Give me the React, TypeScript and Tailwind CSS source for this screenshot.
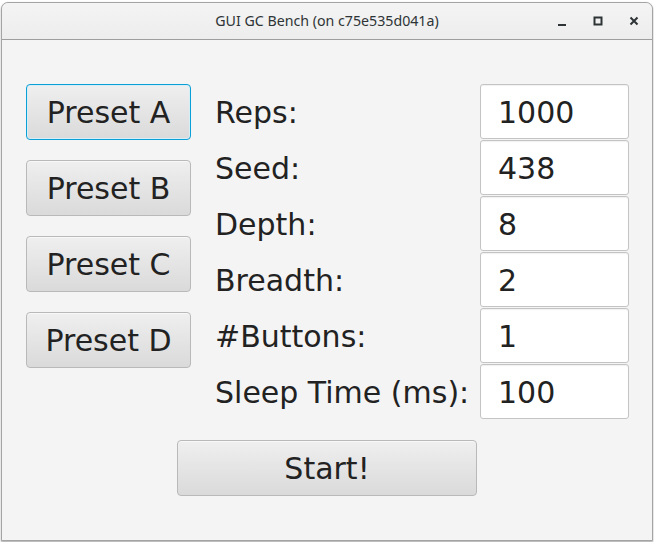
import React from "react";

const font = { fontFamily: '"DejaVu Sans", sans-serif' };

function FxButton({ label, focused, className = "" }: { label: string; focused?: boolean; className?: string }) {
  return (
    <div
      className={
        "flex items-center justify-center rounded-[4px] border bg-gradient-to-b from-[#efefef] to-[#dadada] pt-[2px] text-[30px] leading-none text-[#222] " +
        (focused
          ? "border-[#0aa0d6] shadow-[inset_0_0_0_1px_#d6eef8] "
          : "border-[#b9b9b9] shadow-[inset_0_1px_0_#f8f8f8] ") +
        className
      }
    >
      {label}
    </div>
  );
}

function Field({ label, value }: { label: string; value: string }) {
  return (
    <div className="flex h-[55px] items-center">
      <div className="w-[268px] pl-[3px] pt-[2px] text-[30px] leading-none text-[#222]">{label}</div>
      <div className="flex h-[55px] w-[149px] items-center rounded-[3px] border border-[#c4c4c4] bg-white pl-[17px] pt-[2px] text-[30px] leading-none text-[#222] shadow-[inset_0_1px_1px_rgba(0,0,0,0.06)]">
        {value}
      </div>
    </div>
  );
}

export default function App() {
  return (
    <div className="h-[542px] w-[654px] overflow-hidden bg-white pl-[1px] pt-[2px]" style={font}>
      <div className="flex h-[539px] w-[652px] flex-col rounded-t-[7px] border border-[#a4a4a4] bg-[#f4f4f4] shadow-[0_1px_2px_rgba(0,0,0,0.35)]">
        <div className="relative flex h-[37px] items-center justify-center rounded-t-[7px] border-b border-[#9e9e9e] bg-gradient-to-b from-[#f4f4f4] to-[#ededed]">
          <span
            className="text-[14.2px] text-[#2e3436]"
            style={{ fontFamily: '"Noto Sans", sans-serif' }}
          >
            GUI GC Bench (on c75e535d041a)
          </span>
          <div className="absolute right-[13px] top-0 flex h-full items-center gap-[26px]">
            <svg width="10" height="10" viewBox="0 0 10 10" className="mt-[1px]">
              <rect x="1" y="7" width="8" height="2" fill="#2e3436" />
            </svg>
            <svg width="10" height="10" viewBox="0 0 10 10">
              <rect x="1.5" y="1.5" width="7" height="7" fill="none" stroke="#2e3436" strokeWidth="2" />
            </svg>
            <svg width="10" height="10" viewBox="0 0 10 10">
              <path d="M1.5 1.5 L8.5 8.5 M8.5 1.5 L1.5 8.5" stroke="#2e3436" strokeWidth="2" />
            </svg>
          </div>
        </div>
        <div className="flex flex-col pt-[44px]">
          <div className="flex">
            <div className="ml-[24px] flex w-[165px] flex-col gap-[20px]">
              <FxButton label="Preset A" focused className="h-[56px]" />
              <FxButton label="Preset B" className="h-[56px]" />
              <FxButton label="Preset C" className="h-[56px]" />
              <FxButton label="Preset D" className="h-[56px]" />
            </div>
            <div className="ml-[21px] flex flex-col gap-[1px]">
              <Field label="Reps:" value="1000" />
              <Field label="Seed:" value="438" />
              <Field label="Depth:" value="8" />
              <Field label="Breadth:" value="2" />
              <Field label="#Buttons:" value="1" />
              <Field label="Sleep Time (ms):" value="100" />
            </div>
          </div>
          <div className="mt-[21px] flex justify-center">
            <FxButton label="Start!" className="h-[56px] w-[300px]" />
          </div>
        </div>
      </div>
    </div>
  );
}
